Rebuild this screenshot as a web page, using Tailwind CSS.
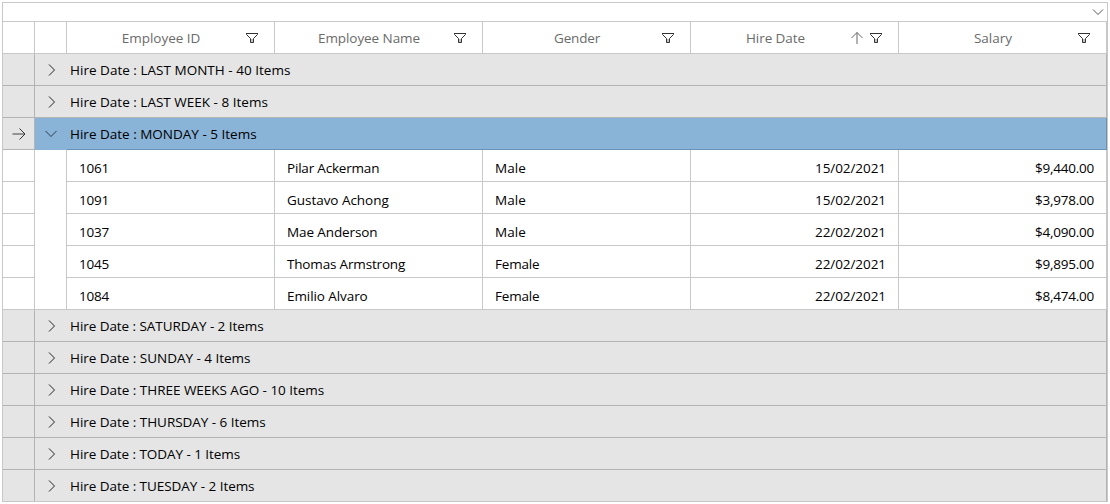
<!DOCTYPE html>
<html lang="en">
<head>
<meta charset="utf-8">
<title>Employees</title>
<script src="https://cdn.jsdelivr.net/npm/@tailwindcss/browser@4"></script>
</head>
<body class="bg-white w-[1110px] h-[504px] pl-0.5 pt-0.5 overflow-hidden font-['Open_Sans',sans-serif] text-[13.5px] text-black">
<svg class="hidden">
  <symbol id="filter" viewBox="0 0 14 12"><path d="M6 7h2v3.500H6z" fill="#c4c4c4"/><path d="M1 1.500h12M1.500 1.500v1L5.500 6.500v4h3v-4L12.500 2.500v-1" fill="none" stroke="#333"/></symbol>
  <symbol id="right" viewBox="0 0 8 12"><path d="M1 .5 6.500 6 1 11.500" fill="none" stroke="#222"/></symbol>
  <symbol id="down" viewBox="0 0 12 8"><path d="M.5 1 6 6.500 11.500 1" fill="none" stroke="#2b3a48"/></symbol>
</svg>
<main id="grid" class="w-[1106px] h-[500px] border border-[#c8c8c8] flex flex-col">
  <div class="h-[19px] shrink-0 border-b border-[#c8c8c8] flex justify-end items-center pr-[3px]">
    <svg class="w-3 h-2" viewBox="0 0 12 8"><path d="M1 1.500 6 6.500 11 1.500" fill="none" stroke="#555"/></svg>
  </div>
  <header id="head" class="h-8 shrink-0 flex border-b border-[#c8c8c8] text-[#6b6b6b]">
    <div class="w-8 border-r border-[#c8c8c8]"></div>
    <div class="w-8 border-r border-[#c8c8c8]"></div>
  </header>
</main>
<script>
const columns = [
  ['Employee ID', 'tracking-[-0.02px]'],
  ['Employee Name', 'tracking-[-0.07px]'],
  ['Gender', 'tracking-[-0.17px]'],
  ['Hire Date', 'tracking-[-0.07px]'],
  ['Salary', 'tracking-[-0.01px]'],
];
const before = [['LAST MONTH - 40 Items', 'tracking-[0.02px]'], ['LAST WEEK - 8 Items', 'tracking-[0.01px]'], ['MONDAY - 5 Items', 'tracking-[0px]']];
const after = [
  ['SATURDAY - 2 Items', 'tracking-[-0.06px]'], ['SUNDAY - 4 Items', 'tracking-[-0.03px]'],
  ['THREE WEEKS AGO - 10 Items', 'tracking-[-0.03px]'], ['THURSDAY - 6 Items', 'tracking-[-0.035px]'],
  ['TODAY - 1 Items', 'tracking-[-0.06px]'], ['TUESDAY - 2 Items', 'tracking-[-0.05px]'],
];
const rows = [
  ['1061', 'Pilar Ackerman', 'tracking-[-0.19px]', 'Male', '15/02/2021', '$9,440.00'],
  ['1091', 'Gustavo Achong', 'tracking-[-0.04px]', 'Male', '15/02/2021', '$3,978.00'],
  ['1037', 'Mae Anderson', 'tracking-[-0.1px]', 'Male', '22/02/2021', '$4,090.00'],
  ['1045', 'Thomas Armstrong', 'tracking-[-0.17px]', 'Female', '22/02/2021', '$9,895.00'],
  ['1084', 'Emilio Alvaro', 'tracking-[-0.08px]', 'Female', '22/02/2021', '$8,474.00'],
];
const head = document.getElementById('head');
const grid = document.getElementById('grid');
head.insertAdjacentHTML('beforeend', columns.map(([label, track]) => `
  <div class="w-52 border-r border-[#c8c8c8] flex items-center pr-[15px]">
    <span class="flex-1 text-center leading-5 ${label === 'Hire Date' ? 'pl-[9px]' : 'pl-[13px] pr-[3px]'} ${track}">${label}</span>
    ${label === 'Hire Date' ? '<svg class="w-3 h-3 mr-1.5" viewBox="0 0 12 12"><path d="M6 .5V12" fill="none" stroke="#999" stroke-width="1.500"/><path d="M.5 6 6 .5 11.500 6" fill="none" stroke="#666"/></svg>' : ''}
    <svg class="w-3.5 h-3"><use href="#filter"/></svg>
  </div>`).join(''));
const group = ([label, track], open, last) => `
  <section class="${last ? 'h-[31px]' : 'h-8'} shrink-0 flex bg-[#e5e5e5]">
    <div class="w-8 flex items-center justify-center border-r border-[#b4b4b4] ${last ? '' : 'border-b'}">
      ${open ? '<svg class="w-3.5 h-3" viewBox="0 0 14 12"><path d="M.5 6H13" fill="none" stroke="#777" stroke-width="1.500"/><path d="M7.500 .5 13 6 7.500 11.500" fill="none" stroke="#333"/></svg>' : ''}
    </div>
    <div class="w-8 flex items-center justify-center ${open ? 'bg-[#8ab3d8]' : last ? '' : 'border-b border-[#b4b4b4]'}">
      ${open ? '<svg class="w-3 h-2"><use href="#down"/></svg>' : '<svg class="w-2 h-3 ml-px"><use href="#right"/></svg>'}
    </div>
    <div class="w-[1040px] flex items-center border-r ${last ? '' : 'border-b'} ${open ? 'bg-[#8ab3d8] border-[#6a92b7]' : 'border-[#b4b4b4]'}">
      <span class="pl-[3px] leading-5 whitespace-pre ${track}">Hire Date : ${label}</span>
    </div>
  </section>`;
const record = ([id, name, track, gender, date, salary], i) => `
  <section class="h-8 shrink-0 flex leading-5 *:border-[#c8c8c8] *:border-r *:shrink-0">
    <div class="w-8 border-b"></div>
    <div class="w-8 ${i === rows.length - 1 ? 'border-b' : ''}"></div>
    <div class="w-52 border-b pl-3 pt-2 tracking-[-0.2px]">${id}</div>
    <div class="w-52 border-b pl-3 pt-2 ${track}">${name}</div>
    <div class="w-52 border-b pl-3 pt-2 ${gender === 'Male' ? 'tracking-[0.05px]' : 'tracking-[-0.2px]'}">${gender}</div>
    <div class="w-52 border-b pr-3 pt-2 text-right tracking-[-0.065px]">${date}</div>
    <div class="w-52 border-b pr-3 pt-2 text-right tracking-[-0.23px]">${salary}</div>
  </section>`;
grid.insertAdjacentHTML('beforeend',
  before.map((g, i) => group(g, i === 2, false)).join('') +
  rows.map(record).join('') +
  after.map((g, i) => group(g, false, i === after.length - 1)).join(''));
</script>
</body>
</html>
